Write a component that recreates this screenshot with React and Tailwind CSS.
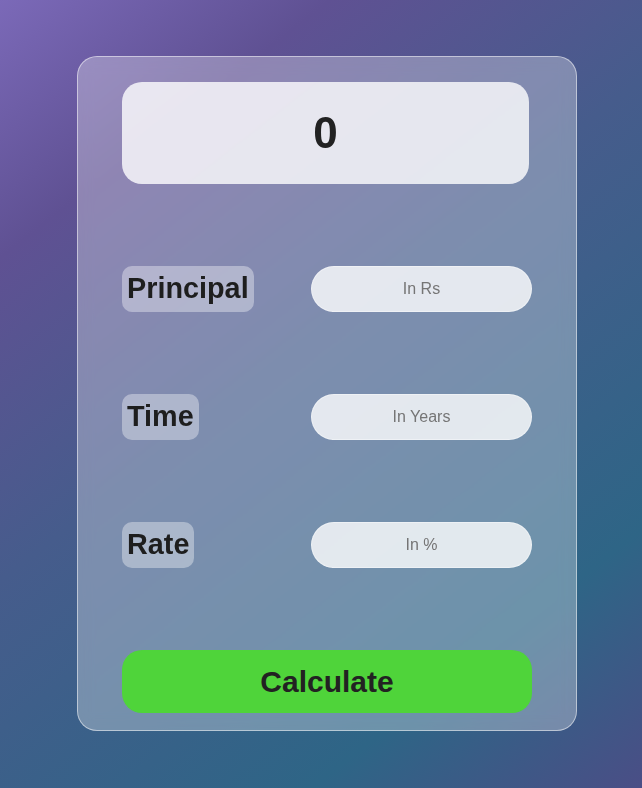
export default function App() {
  const rows = [
    { label: "Principal", ph: "In Rs" },
    { label: "Time", ph: "In Years" },
    { label: "Rate", ph: "In %" },
  ];
  return (
    <div
      className="min-h-screen w-full flex items-start justify-center pt-[56px] pl-[12px] bg-[linear-gradient(142deg,#7b69b8_0%,#5f5193_20%,#465c8c_45%,#2e6586_80%,#4a4e86_100%)]"
      style={{ fontFamily: '"Liberation Sans", Arial, sans-serif' }}
    >
      <div className="w-[500px] h-[675px] rounded-[20px] border border-white/50 bg-white/30 backdrop-blur-sm pt-[25px] px-[44px] flex flex-col gap-[82px]">
        <div className="w-[407px] h-[102px] rounded-[20px] bg-white/80 flex items-center justify-center text-[44px] font-bold text-[#222]">
          0
        </div>
        {rows.map((r) => (
          <div key={r.label} className="flex items-center justify-between h-[46px]">
            <div className="h-[46px] px-[5px] rounded-[10px] bg-white/[0.37] flex items-center text-[28.8px] font-bold text-[#1e1e1e]">
              {r.label}
            </div>
            <input
              type="text"
              placeholder={r.ph}
              className="w-[221px] h-[46px] rounded-full bg-white/80 border border-white/40 text-center text-[16px] text-[#222] placeholder:text-[#757575] outline-none"
              style={{ fontFamily: '"Liberation Sans", Arial, sans-serif' }}
            />
          </div>
        ))}
        <button className="w-[410px] h-[63px] rounded-[20px] bg-[#4fd43a] text-[30px] font-bold text-[#222] flex items-center justify-center">
          Calculate
        </button>
      </div>
    </div>
  );
}
